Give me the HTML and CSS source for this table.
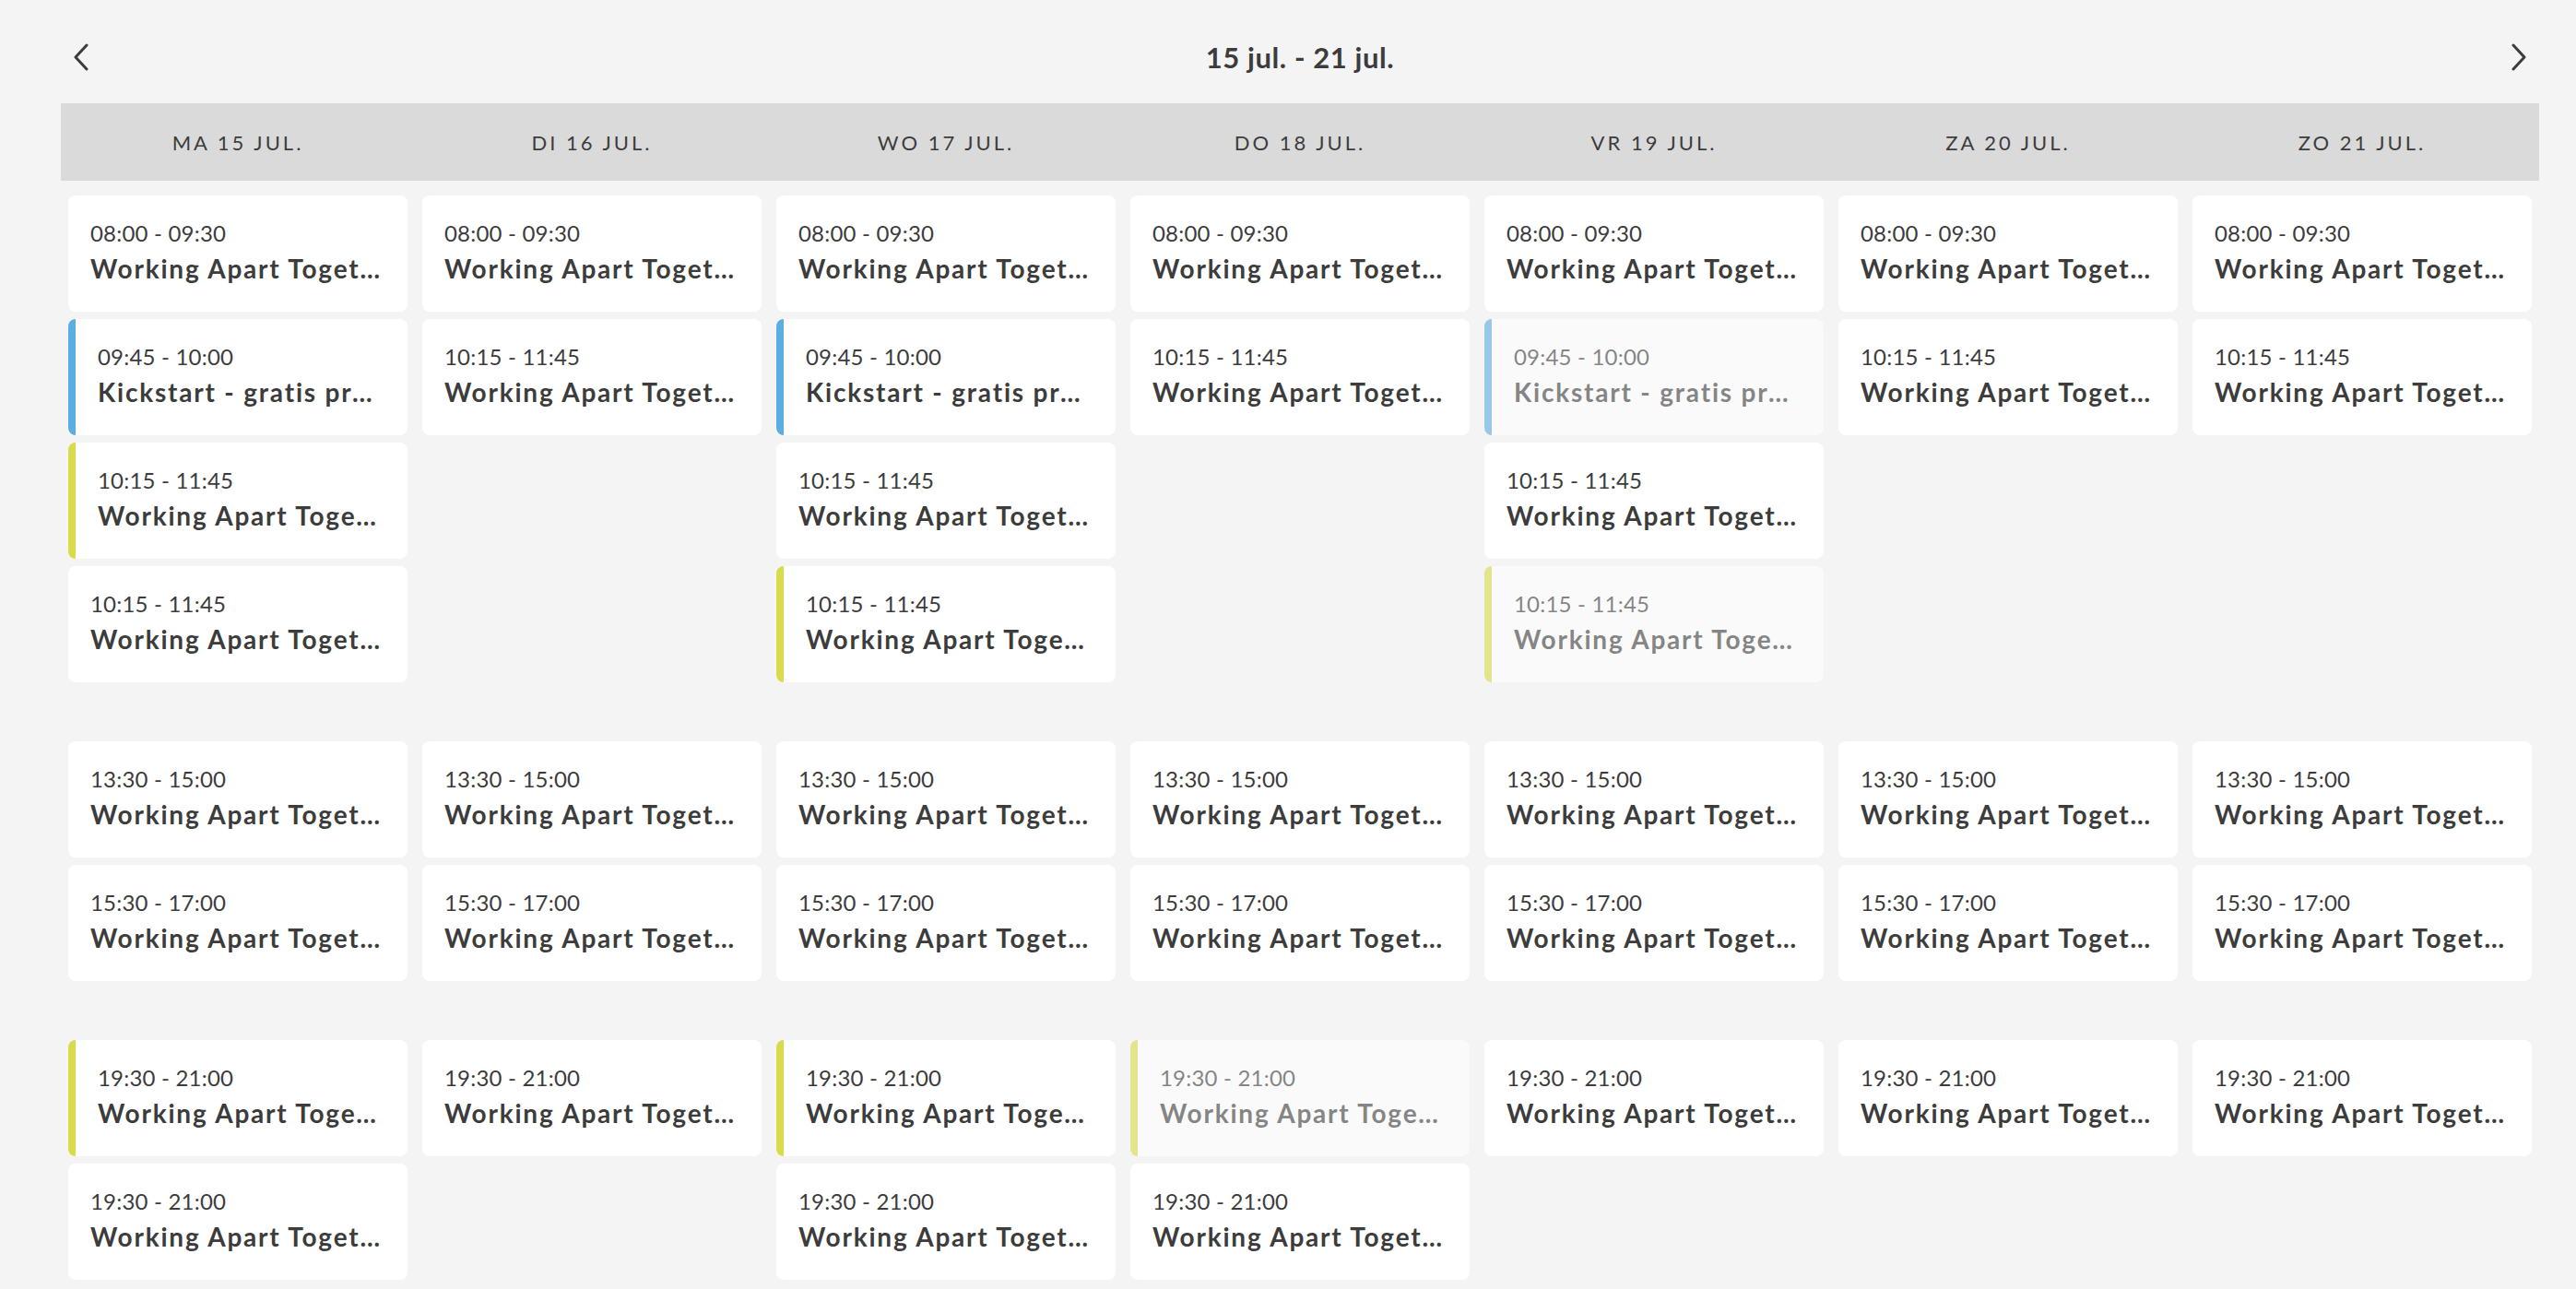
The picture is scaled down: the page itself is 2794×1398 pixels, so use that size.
FILE: index.html
```html
<!DOCTYPE html>
<html lang="nl">
<head>
    <meta charset="UTF-8">
    <meta name="viewport" content="width=device-width, initial-scale=1.0">
    <title>Rooster</title>
    <link rel="stylesheet" href="styles.css">
</head>
<body>
    <div class="schedule">
        <div class="week-nav">
            <button class="nav-btn" aria-label="Vorige week">
                <svg width="16" height="30" viewBox="0 0 16 30"><path d="M14 2 L2 15 L14 28"/></svg>
            </button>
            <div class="week-title">15 jul. - 21 jul.</div>
            <button class="nav-btn" aria-label="Volgende week">
                <svg width="16" height="30" viewBox="0 0 16 30"><path d="M2 2 L14 15 L2 28"/></svg>
            </button>
        </div>

        <div class="days">
            <div class="day">Ma 15 jul.</div>
            <div class="day">Di 16 jul.</div>
            <div class="day">Wo 17 jul.</div>
            <div class="day">Do 18 jul.</div>
            <div class="day">Vr 19 jul.</div>
            <div class="day">Za 20 jul.</div>
            <div class="day">Zo 21 jul.</div>
        </div>

        <!-- ochtend -->
        <div class="period">
            <div class="cell">
                <div class="lesson"><div class="time">08:00 - 09:30</div><div class="name">Working Apart Together</div></div>
                <div class="lesson blue"><div class="time">09:45 - 10:00</div><div class="name">Kickstart - gratis proefles</div></div>
                <div class="lesson green"><div class="time">10:15 - 11:45</div><div class="name">Working Apart Together</div></div>
                <div class="lesson"><div class="time">10:15 - 11:45</div><div class="name">Working Apart Together</div></div>
            </div>
            <div class="cell">
                <div class="lesson"><div class="time">08:00 - 09:30</div><div class="name">Working Apart Together</div></div>
                <div class="lesson"><div class="time">10:15 - 11:45</div><div class="name">Working Apart Together</div></div>
            </div>
            <div class="cell">
                <div class="lesson"><div class="time">08:00 - 09:30</div><div class="name">Working Apart Together</div></div>
                <div class="lesson blue"><div class="time">09:45 - 10:00</div><div class="name">Kickstart - gratis proefles</div></div>
                <div class="lesson"><div class="time">10:15 - 11:45</div><div class="name">Working Apart Together</div></div>
                <div class="lesson green"><div class="time">10:15 - 11:45</div><div class="name">Working Apart Together</div></div>
            </div>
            <div class="cell">
                <div class="lesson"><div class="time">08:00 - 09:30</div><div class="name">Working Apart Together</div></div>
                <div class="lesson"><div class="time">10:15 - 11:45</div><div class="name">Working Apart Together</div></div>
            </div>
            <div class="cell">
                <div class="lesson"><div class="time">08:00 - 09:30</div><div class="name">Working Apart Together</div></div>
                <div class="lesson blue past"><div class="time">09:45 - 10:00</div><div class="name">Kickstart - gratis proefles</div></div>
                <div class="lesson"><div class="time">10:15 - 11:45</div><div class="name">Working Apart Together</div></div>
                <div class="lesson green past"><div class="time">10:15 - 11:45</div><div class="name">Working Apart Together</div></div>
            </div>
            <div class="cell">
                <div class="lesson"><div class="time">08:00 - 09:30</div><div class="name">Working Apart Together</div></div>
                <div class="lesson"><div class="time">10:15 - 11:45</div><div class="name">Working Apart Together</div></div>
            </div>
            <div class="cell">
                <div class="lesson"><div class="time">08:00 - 09:30</div><div class="name">Working Apart Together</div></div>
                <div class="lesson"><div class="time">10:15 - 11:45</div><div class="name">Working Apart Together</div></div>
            </div>
        </div>

        <!-- middag -->
        <div class="period">
            <div class="cell">
                <div class="lesson"><div class="time">13:30 - 15:00</div><div class="name">Working Apart Together</div></div>
                <div class="lesson"><div class="time">15:30 - 17:00</div><div class="name">Working Apart Together</div></div>
            </div>
            <div class="cell">
                <div class="lesson"><div class="time">13:30 - 15:00</div><div class="name">Working Apart Together</div></div>
                <div class="lesson"><div class="time">15:30 - 17:00</div><div class="name">Working Apart Together</div></div>
            </div>
            <div class="cell">
                <div class="lesson"><div class="time">13:30 - 15:00</div><div class="name">Working Apart Together</div></div>
                <div class="lesson"><div class="time">15:30 - 17:00</div><div class="name">Working Apart Together</div></div>
            </div>
            <div class="cell">
                <div class="lesson"><div class="time">13:30 - 15:00</div><div class="name">Working Apart Together</div></div>
                <div class="lesson"><div class="time">15:30 - 17:00</div><div class="name">Working Apart Together</div></div>
            </div>
            <div class="cell">
                <div class="lesson"><div class="time">13:30 - 15:00</div><div class="name">Working Apart Together</div></div>
                <div class="lesson"><div class="time">15:30 - 17:00</div><div class="name">Working Apart Together</div></div>
            </div>
            <div class="cell">
                <div class="lesson"><div class="time">13:30 - 15:00</div><div class="name">Working Apart Together</div></div>
                <div class="lesson"><div class="time">15:30 - 17:00</div><div class="name">Working Apart Together</div></div>
            </div>
            <div class="cell">
                <div class="lesson"><div class="time">13:30 - 15:00</div><div class="name">Working Apart Together</div></div>
                <div class="lesson"><div class="time">15:30 - 17:00</div><div class="name">Working Apart Together</div></div>
            </div>
        </div>

        <!-- avond -->
        <div class="period">
            <div class="cell">
                <div class="lesson green"><div class="time">19:30 - 21:00</div><div class="name">Working Apart Together</div></div>
                <div class="lesson"><div class="time">19:30 - 21:00</div><div class="name">Working Apart Together</div></div>
            </div>
            <div class="cell">
                <div class="lesson"><div class="time">19:30 - 21:00</div><div class="name">Working Apart Together</div></div>
            </div>
            <div class="cell">
                <div class="lesson green"><div class="time">19:30 - 21:00</div><div class="name">Working Apart Together</div></div>
                <div class="lesson"><div class="time">19:30 - 21:00</div><div class="name">Working Apart Together</div></div>
            </div>
            <div class="cell">
                <div class="lesson green past"><div class="time">19:30 - 21:00</div><div class="name">Working Apart Together</div></div>
                <div class="lesson"><div class="time">19:30 - 21:00</div><div class="name">Working Apart Together</div></div>
            </div>
            <div class="cell">
                <div class="lesson"><div class="time">19:30 - 21:00</div><div class="name">Working Apart Together</div></div>
            </div>
            <div class="cell">
                <div class="lesson"><div class="time">19:30 - 21:00</div><div class="name">Working Apart Together</div></div>
            </div>
            <div class="cell">
                <div class="lesson"><div class="time">19:30 - 21:00</div><div class="name">Working Apart Together</div></div>
            </div>
        </div>
    </div>
</body>
</html>
```

FILE: styles.css
```css
body {
    margin: 0;
    background-color: #f4f4f4;
    font-family: Lato, "Noto Sans", sans-serif;
    color: #3c3c3c;
}
.schedule {
    padding: 0 40px 0 66px;
}
.week-nav {
    height: 112px;
    box-sizing: border-box;
    padding-top: 12px;
    display: flex;
    align-items: center;
    justify-content: space-between;
}
.nav-btn {
    width: 44px;
    height: 44px;
    padding: 0;
    border: none;
    background: none;
    display: flex;
    align-items: center;
    justify-content: center;
    cursor: pointer;
}
.nav-btn svg path {
    fill: none;
    stroke: #3c3c3c;
    stroke-width: 3;
    stroke-linecap: round;
    stroke-linejoin: round;
}
.week-title {
    font-size: 31px;
    font-weight: 700;
    letter-spacing: 0.6px;
}
.days {
    height: 84px;
    background-color: #dadada;
    display: grid;
    grid-template-columns: repeat(7, 1fr);
    column-gap: 16px;
    padding: 0 8px;
    align-items: center;
}
.day {
    text-align: center;
    text-transform: uppercase;
    font-size: 22px;
    letter-spacing: 3px;
    color: #3d3d3d;
}
.period {
    display: grid;
    grid-template-columns: repeat(7, minmax(0, 1fr));
    column-gap: 16px;
    padding: 0 8px;
    margin-top: 64px;
    align-items: start;
}
.days + .period {
    margin-top: 16px;
}
.cell {
    display: flex;
    flex-direction: column;
    gap: 8px;
}
.lesson {
    height: 126px;
    box-sizing: border-box;
    padding: 23px 24px 0 24px;
    background-color: #fff;
    border-radius: 8px;
    cursor: pointer;
}
.lesson.blue {
    border-left: 8px solid #5aaee0;
}
.lesson.green {
    border-left: 8px solid #d8dc4b;
}
.lesson.past {
    opacity: 0.6;
}
.time {
    font-size: 24px;
    line-height: 36px;
    letter-spacing: 0.2px;
    white-space: nowrap;
}
.name {
    font-size: 28px;
    line-height: 40px;
    font-weight: 700;
    letter-spacing: 1.8px;
    white-space: nowrap;
    overflow: hidden;
    text-overflow: ellipsis;
}
```
